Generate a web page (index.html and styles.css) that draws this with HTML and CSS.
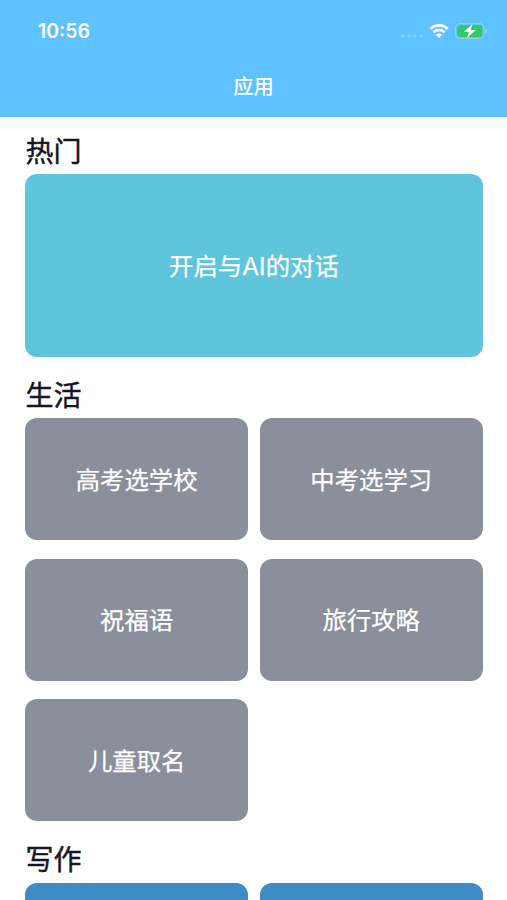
FILE: index.html
```html
<!DOCTYPE html>
<html lang="zh-CN">
<head>
<meta charset="utf-8">
<title>应用</title>
<link rel="stylesheet" href="styles.css">
</head>
<body>
<header class="header">
  <div class="status">
    <span class="time">10:56</span>
    <div class="indicators">
      <span class="dots"><i></i><i></i><i></i><i></i></span>
      <svg class="wifi" viewBox="0 0 20 16" width="20" height="16">
        <g fill="none" stroke="#fff" stroke-width="2.7"><path d="M1.3 6a12.2 12.2 0 0 1 17.4 0"/><path d="M4.4 9.3a7.8 7.8 0 0 1 11.2 0"/></g>
        <path d="M10 15l-3.2-3.2a4.6 4.6 0 0 1 6.4 0z" fill="#fff"/>
      </svg>
      <svg class="battery" viewBox="0 0 33 16" width="33" height="16">
        <rect x=".6" y=".6" width="28.4" height="14.8" rx="4.2" fill="none" stroke="#94d3f4"/>
        <rect x="2.3" y="2.2" width="25" height="11.8" rx="2.4" fill="#34c763"/>
        <path d="M30.4 5.4c2.2.8 2.2 4.4 0 5.2z" fill="#94d3f8"/>
        <path d="M17.6 1L9 8.8h5l-2 6.2 8.8-8h-5z" fill="#fff"/>
      </svg>
    </div>
  </div>
  <h1 class="title">应用</h1>
</header>
<main class="content">
  <section>
    <h2>热门</h2>
    <div class="grid"><div class="card hot">开启与AI的对话</div></div>
  </section>
  <section>
    <h2>生活</h2>
    <div class="grid">
      <div class="card">高考选学校</div>
      <div class="card">中考选学习</div>
      <div class="card">祝福语</div>
      <div class="card">旅行攻略</div>
      <div class="card">儿童取名</div>
    </div>
  </section>
  <section>
    <h2>写作</h2>
    <div class="grid"><div class="card writing"></div><div class="card writing"></div></div>
  </section>
</main>
</body>
</html>
```
FILE: styles.css
```css
* { box-sizing: border-box; }
html { height: 100%; overflow: hidden; }
body {
  margin: 0;
  height: 900px;
  overflow: hidden;
  display: flex;
  flex-direction: column;
  background: #fff;
  font-family: Inter, "Noto Sans CJK SC", sans-serif;
}
.header { flex: none; height: 116.5px; background: #5dc2ff; color: #fff; }
.status {
  height: 62px;
  padding: 0 19px 0 38px;
  display: flex;
  align-items: center;
  justify-content: space-between;
}
.time { font-size: 19.5px; font-weight: 600; }
.indicators { display: flex; align-items: center; }
.dots { display: flex; gap: 2px; margin: 9px 6px 0 0; }
.dots i { width: 4px; height: 4px; border-radius: 50%; background: #7dcdfd; }
.wifi { margin-right: 6px; }
.title {
  margin: 0;
  padding-top: 1px;
  font-size: 20.3px;
  line-height: 48px;
  font-weight: 500;
  text-align: center;
}
.content { flex: 1; min-height: 0; overflow: hidden; padding: 17.5px 24.5px 0 25.4px; }
h2 {
  margin: 0;
  height: 40px;
  padding-top: 1.5px;
  font-size: 28px;
  line-height: 32px;
  font-weight: 400;
  -webkit-text-stroke: .45px #151527;
  color: #151527;
}
section { margin-bottom: 21.3px; }
.grid { display: grid; grid-template-columns: 1fr 1fr; gap: 18.5px 12px; }
.card {
  height: 122px;
  padding-bottom: 2px;
  border-radius: 12px;
  display: flex;
  align-items: center;
  justify-content: center;
  background: #898f9b;
  color: #fff;
  font-size: 24.4px;
  -webkit-text-stroke: .25px #fff;
}
.hot { grid-column: 1 / -1; height: 183px; background: #5ec5dc; }
.writing { background: #3d8bc7; }
```
